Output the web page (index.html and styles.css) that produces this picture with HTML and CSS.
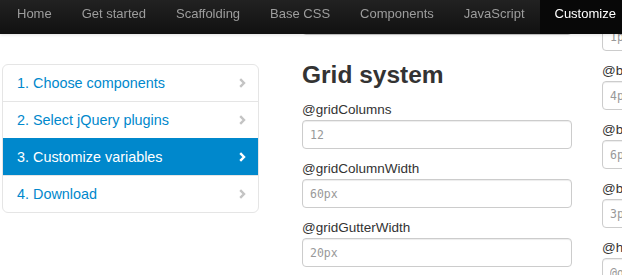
FILE: index.html
```html
<!DOCTYPE html>
<html>
<head>
    <link rel="stylesheet" href="styles.css">
</head>
<body>
    <div class="navbar">
        <ul class="nav">
            <li><a href="#">Home</a></li>
            <li><a href="#">Get started</a></li>
            <li><a href="#">Scaffolding</a></li>
            <li><a href="#">Base CSS</a></li>
            <li><a href="#">Components</a></li>
            <li><a href="#">JavaScript</a></li>
            <li class="active"><a href="#">Customize</a></li>
        </ul>
    </div>

    <div class="page">
        <ul class="sidenav">
            <li><a href="#">1. Choose components <span class="chevron"><svg width="7" height="10" viewBox="0 0 7 10"><path d="M1.2 1.2 L5 5 L1.2 8.8" /></svg></span></a></li>
            <li><a href="#">2. Select jQuery plugins <span class="chevron"><svg width="7" height="10" viewBox="0 0 7 10"><path d="M1.2 1.2 L5 5 L1.2 8.8" /></svg></span></a></li>
            <li class="active"><a href="#">3. Customize variables <span class="chevron"><svg width="7" height="10" viewBox="0 0 7 10"><path d="M1.2 1.2 L5 5 L1.2 8.8" /></svg></span></a></li>
            <li><a href="#">4. Download <span class="chevron"><svg width="7" height="10" viewBox="0 0 7 10"><path d="M1.2 1.2 L5 5 L1.2 8.8" /></svg></span></a></li>
        </ul>

        <div class="vars first-col">
            <div class="field">
                <label>@linkColorHover</label>
                <input type="text" placeholder="darken(@linkColor, 15%)">
            </div>
            <h2>Grid system</h2>
            <div class="field">
                <label for="gridColumns">@gridColumns</label>
                <input type="text" id="gridColumns" placeholder="12">
            </div>
            <div class="field">
                <label for="gridColumnWidth">@gridColumnWidth</label>
                <input type="text" id="gridColumnWidth" placeholder="60px">
            </div>
            <div class="field">
                <label for="gridGutterWidth">@gridGutterWidth</label>
                <input type="text" id="gridGutterWidth" placeholder="20px">
            </div>
        </div>

        <div class="vars second-col">
            <div class="field">
                <label>@baseLineHeight</label>
                <input type="text" placeholder="1px">
            </div>
            <div class="field">
                <label>@baseBorderRadius</label>
                <input type="text" placeholder="4px">
            </div>
            <div class="field">
                <label>@borderRadiusLarge</label>
                <input type="text" placeholder="6px">
            </div>
            <div class="field">
                <label>@borderRadiusSmall</label>
                <input type="text" placeholder="3px">
            </div>
            <div class="field">
                <label>@heroUnitBackground</label>
                <input type="text" placeholder="@grayLighter">
            </div>
        </div>
    </div>
</body>
</html>
```

FILE: styles.css
```css
html, body {
    margin: 0;
    padding: 0;
    overflow: hidden;
    height: 100%;
}
body {
    font-family: "Liberation Sans", Arial, sans-serif;
    background-color: #fff;
    color: #333;
}
.navbar {
    position: fixed;
    top: 0;
    left: 0;
    right: 0;
    height: 34px;
    z-index: 10;
    background-image: linear-gradient(to bottom, #222, #111);
    box-shadow: 0 1px 3px rgba(0,0,0,0.12);
}
.nav {
    list-style: none;
    margin: 0 0 0 2px;
    padding: 0;
    display: flex;
}
.nav a {
    display: block;
    padding: 4px 15px 10px;
    line-height: 20px;
    font-size: 13px;
    color: #9d9d9d;
    text-decoration: none;
    white-space: nowrap;
}
.nav .active a {
    color: #fff;
    background-color: #080808;
}
.page {
    display: flex;
    align-items: flex-start;
    padding-left: 2px;
    width: 1000px;
}
.sidenav {
    list-style: none;
    margin: 64px 0 0;
    padding: 0;
    width: 255px;
    border: 1px solid #e5e5e5;
    border-radius: 6px;
    overflow: hidden;
    flex: none;
}
.sidenav li + li {
    border-top: 1px solid #e5e5e5;
}
.sidenav a {
    display: flex;
    justify-content: space-between;
    align-items: center;
    height: 36px;
    padding: 0 12px 0 14px;
    font-size: 14.4px;
    color: #0088cc;
    text-decoration: none;
}
.sidenav .chevron {
    display: flex;
}
.sidenav .chevron path {
    fill: none;
    stroke: #c4c4c4;
    stroke-width: 2.4;
}
.sidenav .active {
    background-color: #0088cc;
    border-top-color: #0088cc !important;
}
.sidenav .active a {
    color: #fff;
}
.sidenav .active .chevron path {
    stroke: #fff;
}
.vars {
    width: 270px;
    flex: none;
}
.first-col {
    margin: -14px 0 0 43px;
}
.second-col {
    margin: 2px 0 0 30px;
}
.field {
    padding-bottom: 10px;
}
.field label {
    display: block;
    height: 20px;
    line-height: 20px;
    font-size: 13.5px;
    color: #333;
    white-space: nowrap;
}
.field input {
    display: block;
    box-sizing: border-box;
    width: 270px;
    height: 29px;
    margin: 0;
    padding: 0 7px;
    border: 1px solid #ccc;
    border-radius: 4px;
    box-shadow: inset 0 1px 1px rgba(0,0,0,0.075);
    font-family: "DejaVu Sans Mono", monospace;
    font-size: 11.5px;
    background: #fff;
}
.field input::placeholder {
    color: #999;
}
h2 {
    margin: 15px 0 10px;
    font-size: 24.5px;
    line-height: 30px;
    font-weight: bold;
    color: #333;
}
```
